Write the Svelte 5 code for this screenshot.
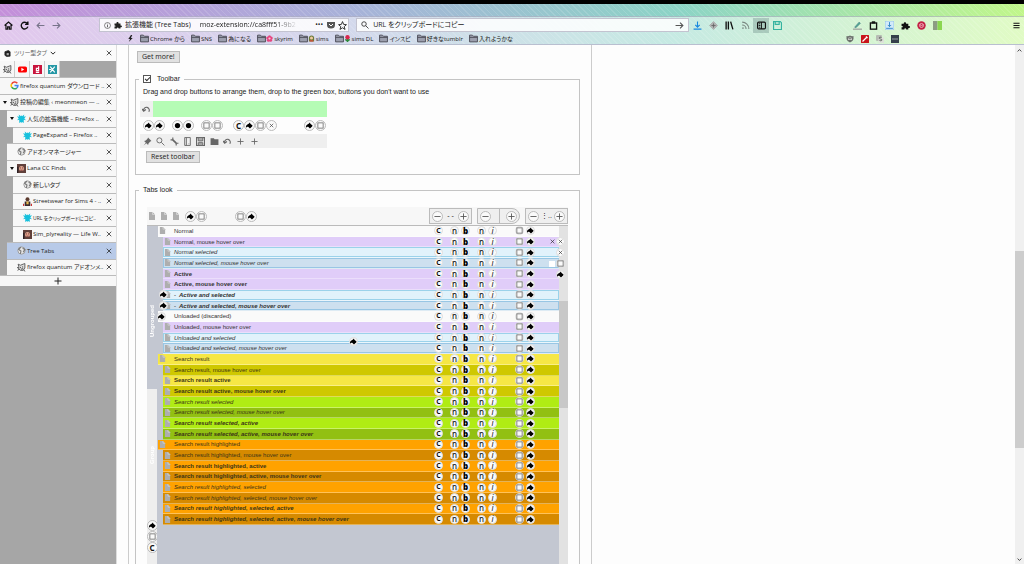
<script lang="ts">
	const bookmarks = [
		{ label: 'Chrome から' },
		{ label: 'SNS' },
		{ label: '為になる' },
		{ label: 'skyrim', icon: 'flower' },
		{ label: 'sims', icon: 'gem' },
		{ label: 'sims DL', icon: 'rose' },
		{ label: 'インスピ' },
		{ label: '好きなtumblr' },
		{ label: '入れようかな' }
	];

	const sideTabs = [
		{ title: 'firefox quantum ダウンロード ..', depth: 0, icon: 'google' },
		{ title: '投稿の編集 ‹ meonmeon — ..', depth: 0, icon: 'cat', open: true },
		{ title: '人気の拡張機能 – Firefox ..', depth: 1, icon: 'addon', open: true },
		{ title: 'PageExpand – Firefox ..', depth: 2, icon: 'addon' },
		{ title: 'アドオンマネージャー', depth: 1, icon: 'globe' },
		{ title: 'Lana CC Finds', depth: 1, icon: 'photo', open: true },
		{ title: '新しいタブ', depth: 2, icon: 'globe' },
		{ title: 'Streetwear for Sims 4 - ..', depth: 2, icon: 'person' },
		{ title: 'URL をクリップボードにコピ..', depth: 2, icon: 'addon', long: true },
		{ title: 'Sim_plyreality — Life W..', depth: 2, icon: 'photo' },
		{ title: 'Tree Tabs', depth: 1, icon: 'globe', active: true },
		{ title: 'firefox quantum アドオンメ..', depth: 1, icon: 'cat' }
	];

	const pinned = ['cat', 'youtube', 'd', 'x'];

	// b = bold, i = italic, p = parent row
	const rows = [
		{ label: 'Normal', tone: 'plain', style: 'p' },
		{ label: 'Normal, mouse hover over', tone: 'hover', style: '' },
		{ label: 'Normal selected', tone: 'sel', style: 'i' },
		{ label: 'Normal selected, mouse hover over', tone: 'selhover', style: 'i' },
		{ label: 'Active', tone: 'hover', style: 'b' },
		{ label: 'Active, mouse hover over', tone: 'hover', style: 'b' },
		{ label: 'Active and selected', tone: 'sel', style: 'bi', mark: '-', paint: true },
		{ label: 'Active and selected, mouse hover over', tone: 'selhover', style: 'bi', mark: '-', paint: true },
		{ label: 'Unloaded (discarded)', tone: 'plain', style: 'p', paint: true },
		{ label: 'Unloaded, mouse hover over', tone: 'hover', style: '' },
		{ label: 'Unloaded and selected', tone: 'sel', style: 'i' },
		{ label: 'Unloaded and selected, mouse hover over', tone: 'selhover', style: 'i' },
		{ label: 'Search result', tone: 'yellow', style: 'p' },
		{ label: 'Search result, mouse hover over', tone: 'olive', style: '' },
		{ label: 'Search result active', tone: 'yellow', style: 'b' },
		{ label: 'Search result active, mouse hover over', tone: 'olive', style: 'b' },
		{ label: 'Search result selected', tone: 'lime', style: 'i' },
		{ label: 'Search result selected, mouse hover over', tone: 'moss', style: 'i' },
		{ label: 'Search result selected, active', tone: 'lime', style: 'bi' },
		{ label: 'Search result selected, active, mouse hover over', tone: 'moss', style: 'bi' },
		{ label: 'Search result highlighted', tone: 'orange', style: 'p' },
		{ label: 'Search result highlighted, mouse hover over', tone: 'brown', style: '' },
		{ label: 'Search result highlighted, active', tone: 'orange', style: 'b' },
		{ label: 'Search result highlighted, active, mouse hover over', tone: 'brown', style: 'b' },
		{ label: 'Search result highlighted, selected', tone: 'orange', style: 'i' },
		{ label: 'Search result highlighted, selected, mouse hover over', tone: 'brown', style: 'i' },
		{ label: 'Search result highlighted, selected, active', tone: 'orange', style: 'bi' },
		{ label: 'Search result highlighted, selected, active, mouse hover over', tone: 'brown', style: 'bi' }
	];

	const toolGroups = [
		['bucket', 'bucket'],
		['dot', 'dot'],
		['square', 'square'],
		['c', 'bucket', 'square', 'cross'],
		['bucket', 'square']
	];
	const rowGroups = [['c'], ['n', 'b'], ['n', 'i'], ['square', 'bucket']];
	const unused = ['pin', 'search', 'wrench', 'panel', 'save', 'folderfill', 'undo', 'plus', 'plus'];

	const navIcons = ['home', 'reload', 'back', 'forward'];
	const midIcons = ['download', 'diamond', 'library', 'rss', 'sidebar', 'floppy'];
	const extIcons = ['pen', 'clipboard', 'savebox', 'puzzle', 'redeye', 'swatch'];
	const ext2Icons = ['shield', 'redpen', 'sbox', 'dots3'];

	let toolbarOn = $state(true);
	let query = $state('URL をクリップボードにコピー');
</script>

{#snippet icon(name: string, size: number)}
	<svg class="icon" width={size} height={size} viewBox="0 0 16 16" fill="none" stroke="currentColor" stroke-width="1.6" aria-hidden="true">
		{#if name === 'home'}
			<path d="M1 8 8 2l7 6M3.500 7v7.500h3v-4h3v4h3V7" stroke-width="2.200" />
		{:else if name === 'reload'}
			<path d="M13 4.500A6 6 0 1 0 14 10M14 1v5H9" stroke-width="2.400" />
		{:else if name === 'back'}
			<path d="M15 8H2M7 3 2 8l5 5" stroke="#77748a" stroke-width="2" />
		{:else if name === 'forward'}
			<path d="M1 8h13M9 3l5 5-5 5" stroke="#77748a" stroke-width="2" />
		{:else if name === 'go'}
			<path d="M1 8h13M9 3l5 5-5 5" stroke="#555" stroke-width="2" />
		{:else if name === 'info'}
			<circle cx="8" cy="8" r="6.800" stroke-width="1.200" /><path d="M8 7v5M8 4v1.600" />
		{:else if name === 'puzzle'}
			<path d="M1 5h4c-1-4 5-4 4 0h4v4c4-1 4 4 0 3.500V15H9c1-3-4-3-3 0H1v-4c3 1 3-3 0-2z" fill="currentColor" stroke="none" />
		{:else if name === 'pocket'}
			<path d="M0 2h16v6a8 7 0 0 1-16 0z" fill="#555" stroke="none" /><path d="m4 6 4 4 4-4" stroke="#fff" stroke-width="2" />
		{:else if name === 'star'}
			<path d="m8 1 2 5 5 .500-4 3.500 1.500 5L8 12l-4.500 3L5 10 1 6.500 6 6z" />
		{:else if name === 'search'}
			<circle cx="6" cy="6" r="4.500" /><path d="m9.500 9.500 5.500 5.500" />
		{:else if name === 'download'}
			<path d="M8 1v9M4 7l4 4 4-4M1 14.500h14" stroke="#1788e0" stroke-width="2" />
		{:else if name === 'diamond'}
			<path d="m8 1 7 7-7 7-7-7z" fill="#b5b9b8" stroke="#aaa" /><path d="M8 4v8M4 8h8" stroke="#777" /><circle cx="8" cy="8" r="2" fill="#666" stroke="none" />
		{:else if name === 'library'}
			<path d="M2 1v14M6 1v14M10 1l4 14" stroke-width="2.400" />
		{:else if name === 'rss'}
			<path d="M2 7a7 7 0 0 1 7 7M2 2a12 12 0 0 1 12 12" stroke="#7b8983" stroke-width="2" /><circle cx="3.500" cy="12.500" r="1.500" fill="#7b8983" stroke="none" />
		{:else if name === 'sidebar'}
			<rect x="1" y="2" width="14" height="12" rx="2" stroke-width="2" /><path d="M8 2v12M3 5h3M3 8h3M3 11h3" />
		{:else if name === 'floppy'}
			<path d="M1 1h12l2 2v12H1zM4 1v5h7V1" stroke="#34b3a0" stroke-width="2" />
		{:else if name === 'pen'}
			<path d="m3 11 8-9 2 2-8 8z" fill="#3baa87" stroke="#5f8f94" /><path d="M0 14.500h16" stroke="#999" stroke-width="2" />
		{:else if name === 'clipboard'}
			<rect x="2.500" y="3.500" width="11" height="11" stroke-width="2.400" /><path d="M5 2.500h6" stroke-width="4" />
		{:else if name === 'savebox'}
			<rect x="0" y="0" width="16" height="16" fill="#d3ebfa" stroke="#8fc1e4" /><path d="M8 2v8M5 7l3 3 3-3M2 13h12" stroke="#2b83c6" />
		{:else if name === 'redeye'}
			<circle cx="8" cy="8" r="7.500" fill="#c32345" stroke="none" /><circle cx="8" cy="8" r="3.500" stroke="#efb6c1" /><path d="m5 6 3 3 3-3" stroke="#efb6c1" />
		{:else if name === 'swatch'}
			<path d="M0 0h8v16H0z" fill="#8d9c83" stroke="none" /><path d="M8 0h8v16H8z" fill="#8bd650" stroke="none" />
		{:else if name === 'shield'}
			<path d="M1 2q4 1 7-1 3 2 7 1v6q-1 5-7 7-6-2-7-7z" fill="#6c716d" stroke="none" /><path d="M4 5h8v5H4z" fill="#c8ccc6" stroke="none" /><path d="m4 5 4 3 4-3" stroke="#666" />
		{:else if name === 'redpen'}
			<rect width="16" height="16" rx="1" fill="#c9141b" stroke="none" /><path d="m3 13 9-9M10 3l3 3" stroke="#fff" stroke-width="2.500" />
		{:else if name === 'sbox'}
			<rect width="12" height="12" rx="2" fill="#b7bcb5" stroke="none" /><rect x="5" y="5" width="11" height="11" fill="#dde1da" stroke="none" /><path d="M11 5c-6-2-6 3-2 3s4 5-2 3" stroke="#444" />
		{:else if name === 'dots3'}
			<rect width="16" height="16" fill="#35404b" stroke="none" /><path d="M3 8h2M7 8h2M11 8h2" stroke="#fff" stroke-width="2" />
		{:else if name === 'menu'}
			<path d="M1 3h14M1 8h14M1 13h14" stroke-width="2.400" />
		{:else if name === 'bolt'}
			<path d="M9 0 3 9h4l-3 7 9-9H9l3-7z" fill="currentColor" stroke="none" />
		{:else if name === 'folder'}
			<path d="M1 14V2h5l2 2h7v10z" fill="#9c9fae" stroke="#4a4a55" /><path d="M1 6h14" stroke="#4a4a55" />
		{:else if name === 'flower'}
			<g fill="#e6457f" stroke="none"><circle cx="8" cy="4" r="3.500" /><circle cx="4" cy="7" r="3.500" /><circle cx="12" cy="7" r="3.500" /><circle cx="5.500" cy="12" r="3.500" /><circle cx="10.500" cy="12" r="3.500" /></g><circle cx="8" cy="8" r="2.500" fill="#f8c7d6" stroke="none" />
		{:else if name === 'gem'}
			<path d="M2 15V7a6 6 0 0 1 12 0v8z" fill="#6b7a3a" stroke="none" /><circle cx="8" cy="7" r="3.500" fill="#f1c9a0" stroke="none" /><path d="M4 15v-3h8v3z" fill="#d74b3a" stroke="none" />
		{:else if name === 'rose'}
			<path d="M8 9v7M8 14l-5-4M8 14l5-4" stroke="#2f8a3c" stroke-width="3" /><circle cx="8" cy="5" r="5" fill="#d8264d" stroke="none" />
		{:else if name === 'google'}
			<path d="M13 4A6 6 0 0 0 3 5" stroke="#ea4335" stroke-width="2.800" /><path d="M3 5a6 6 0 0 0 0 6" stroke="#fbbc05" stroke-width="2.800" /><path d="M3 11a6 6 0 0 0 9 1.500" stroke="#34a853" stroke-width="2.800" /><path d="M12 12.500A6 6 0 0 0 14 8H8" stroke="#4285f4" stroke-width="2.800" />
		{:else if name === 'cat'}
			<path d="M3 6 2 2l4 2 5-2 3-1v8l-3 4H6L3 10z" fill="#ddd" stroke="#555" /><path d="M6 7v2M10 6v2M7 11l4-1M0 8l3 1M1 13l3-2M12 12l2 3" stroke="#444" />
		{:else if name === 'addon'}
			<path d="m0 4 4 1-1-4 4 3 1-2 1 2 4-3-1 4 4-1-3 4 3 3-4-1v6l-3-2-1 2-1-2-3 2v-6l-4 1 3-3z" fill="#16c0dc" stroke="none" />
		{:else if name === 'globe'}
			<circle cx="8" cy="8" r="6.500" fill="#e8e8e8" stroke="#999" /><path d="M7 2 3 6l4 3-1 5M10 4l4 2-3 5" stroke="#777" stroke-width="2" />
		{:else if name === 'photo'}
			<rect width="16" height="16" fill="#60403b" stroke="none" /><circle cx="8" cy="8" r="4.500" fill="#dda58f" stroke="none" /><path d="M5 7h2M9 7h2M6 11h4" stroke="#7b2e2e" /><path d="M1 16V5" stroke="#2d2024" stroke-width="3" />
		{:else if name === 'person'}
			<circle cx="8" cy="4" r="3.500" fill="#5b3a2e" stroke="none" /><path d="M3 8h10v8H3z" fill="#3a2b30" stroke="none" /><path d="M6 8h4v5H6z" fill="#e6b84e" stroke="none" /><path d="M1 12v4M15 12v4" stroke="#c33" stroke-width="2" />
		{:else if name === 'youtube'}
			<rect y="2.500" width="16" height="11" rx="3" fill="#f00" stroke="none" /><path d="m6 5 5 3-5 3z" fill="#fff" stroke="none" />
		{:else if name === 'd'}
			<rect width="16" height="16" fill="#c8143c" stroke="none" /><path d="M10 2v8H6V6h4M5 13h6" stroke="#fff" stroke-width="2" />
		{:else if name === 'x'}
			<rect width="16" height="16" fill="#2698a6" stroke="none" /><path d="m4 3 8 10M12 3 4 13M2 8h4" stroke="#fff" stroke-width="2" />
		{:else if name === 'book'}
			<path d="M2 4 10 1l4 3v10l-8 1-4-3z" fill="#222" stroke="#222" /><path d="M6 7h5v5H6z" fill="#aaa" stroke="none" />
		{:else if name === 'chev'}
			<path d="m2 5 6 6 6-6" stroke-width="2.600" />
		{:else if name === 'up'}
			<path d="m2 11 6-6 6 6" stroke-width="2.600" />
		{:else if name === 'close'}
			<path d="m2 2 12 12M14 2 2 14" stroke-width="2" />
		{:else if name === 'plus'}
			<path d="M8 1v14M1 8h14" stroke-width="2" />
		{:else if name === 'undo'}
			<path d="M3 10a5 5 0 1 1 9 2M0 7l3 4 4-3" stroke-width="2" />
		{:else if name === 'pin'}
			<path d="m9 1 6 6-2 1-3 3-1 3-3-3-5 4 4-5-3-3 3-1 3-3z" fill="currentColor" stroke="none" />
		{:else if name === 'wrench'}
			<path d="m5 5 6 6" stroke-width="3" /><path d="M1 5h4V1M11 15v-4h4" stroke-width="2" />
		{:else if name === 'panel'}
			<path d="M3 1h10v14H3zM6 1v14M10 12h1" />
		{:else if name === 'save'}
			<path d="M1 1h14v14H1z" stroke-width="2" /><path d="M4 1h8v6H4zM4 10h8v5H4z" fill="#aaa" />
		{:else if name === 'folderfill'}
			<path d="M1 2h6l1 2h7v10H1z" fill="currentColor" stroke="none" />
		{:else if name === 'page'}
			<path d="M2 0h7l5 5v11H2z" fill="#aeaeae" stroke="none" /><path d="M9 0v5h5" stroke="#d9d9d9" />
		{/if}
	</svg>
{/snippet}

{#snippet knob(name: string, size = 'large')}
	<button class="knob {size}" aria-label={name}>
		{#if name === 'c' || name === 'n' || name === 'b' || name === 'i'}
			<span class="glyph {name}">{name === 'c' ? 'C' : name}</span>
		{:else}
			<svg viewBox="0 0 16 16" aria-hidden="true">
				{#if name === 'bucket'}
					<path d="M1 13q-3-5 3-8l2-1 3-3 1 3 5 4-1 2-5 5-4-4q-3-1-4 2z" fill="#000" />
				{:else if name === 'dot'}
					<circle cx="8" cy="8" r="6" fill="#000" />
				{:else if name === 'square'}
					<rect x="2" y="2" width="12" height="12" fill="#fafafa" stroke="#666" stroke-width="1.800" />
				{:else if name === 'cross'}
					<path d="m4 4 8 8M12 4l-8 8" stroke="#444" stroke-width="1.600" />
				{:else if name === 'minus'}
					<path d="M1 8h14" stroke="#555" stroke-width="2" />
				{:else if name === 'plus'}
					<path d="M8 1v14M1 8h14" stroke="#555" stroke-width="2" />
				{/if}
			</svg>
		{/if}
	</button>
{/snippet}

<div class="browser">
	<header>
		<div class="strip"></div>
		<nav class="bar">
			{#each navIcons as name}
				<button class="tool" aria-label={name}>{@render icon(name, 9)}</button>
			{/each}
			<div class="url">
				{@render icon('info', 7)}
				{@render icon('puzzle', 8)}
				<span class="site">拡張機能 (Tree Tabs)</span>
				<span class="address">moz-extension://ca8fff51-9b2</span>
				<span class="more">•••</span>
				{@render icon('pocket', 8)}
				{@render icon('star', 9)}
			</div>
			<label class="find">
				{@render icon('search', 8)}
				<input type="text" aria-label="Search" bind:value={query} />
				{@render icon('go', 9)}
			</label>
			{#each midIcons as name}
				<button class="tool" class:on={name === 'sidebar'} aria-label={name}>{@render icon(name, 9)}</button>
			{/each}
			<div class="exts">
				{#each extIcons as name}
					<button class="tool" aria-label={name}>{@render icon(name, 9)}</button>
				{/each}
			</div>
			<button class="tool menu" aria-label="menu">{@render icon('menu', 7)}</button>
		</nav>
		<div class="marks">
			{@render icon('bolt', 7)}
			{#each bookmarks as mark}
				<a href="#top">
					{@render icon('folder', 9)}
					{#if mark.icon}{@render icon(mark.icon, 7)}{/if}<span>{mark.label}</span>
				</a>
			{/each}
			<div class="marks-end">
				{#each ext2Icons as name}
					<button class="tool" aria-label={name}>{@render icon(name, 8)}</button>
				{/each}
			</div>
		</div>
	</header>

	<div class="body">
		<aside>
			<div class="side-head">
				{@render icon('book', 7)}
				<span>ツリー型タブ</span>
				{@render icon('chev', 6)}
				<button class="x" aria-label="Close sidebar">{@render icon('close', 6)}</button>
			</div>
			<div class="pins">
				{#each pinned as name}
					<button aria-label={name}>{@render icon(name, 9)}</button>
				{/each}
			</div>
			<div class="side-tabs">
				{#each sideTabs as tab}
					<div class="side-tab d{tab.depth}" class:active={tab.active}>
						<span class="twisty">{#if tab.open}<i></i>{/if}</span>
						{@render icon(tab.icon, 9)}
						<span class="title" class:long={tab.long}>{tab.title}</span>
						<button class="x" aria-label="Close tab">{@render icon('close', 6)}</button>
					</div>
				{/each}
			</div>
			<button class="new-tab" aria-label="New tab">{@render icon('plus', 8)}</button>
		</aside>

		<main>
			<button class="btn">Get more!</button>

			<fieldset class="toolbar-set">
				<legend class="check">
					<input type="checkbox" id="toolbar-on" bind:checked={toolbarOn} />
					<label for="toolbar-on">Toolbar</label>
				</legend>
				<p>Drag and drop buttons to arrange them, drop to the green box, buttons you don't want to use</p>
				<div class="tools">
					<div class="green"><span class="cell">{@render icon('undo', 9)}</span></div>
					<div class="knobs">
						{#each toolGroups as group}
							<div class="group">
								{#each group as name}{@render knob(name)}{/each}
							</div>
						{/each}
					</div>
					<div class="unused">
						{#each unused as name}
							<span class="cell">{@render icon(name, name === 'plus' ? 7 : 9)}</span>
						{/each}
					</div>
				</div>
				<button class="btn reset">Reset toolbar</button>
			</fieldset>

			<fieldset class="look-set">
				<legend>Tabs look</legend>
				<div class="preview">
					<div class="preview-head">
						<div class="pages">
							{#each [0, 1, 2] as n (n)}{@render icon('page', 8)}{/each}
						</div>
						<div class="group">{@render knob('bucket')}{@render knob('square')}</div>
						<div class="group second">{@render knob('square')}{@render knob('bucket')}</div>
						<div class="steps">
							<div class="step">{@render knob('minus')}<span>- -</span>{@render knob('plus')}</div>
							<div class="step round">{@render knob('minus')}{@render knob('plus')}</div>
							<div class="step">{@render knob('minus')}<span>⋮..</span>{@render knob('plus')}</div>
						</div>
					</div>
					<div class="preview-body">
						<div class="groups">
							<div class="group-tab current"><span>Ungrouped</span></div>
							<div class="group-tab"><span>Group</span></div>
							<div class="group-tools">
								{@render knob('bucket')}{@render knob('square')}{@render knob('c')}
							</div>
						</div>
						<div class="list">
							<div class="rows">
								{#each rows as row}
									<div class="row {row.tone}" class:parent={row.style.includes('p')}>
										<span class="favicon" class:both={row.paint && !row.style.includes('p')}>
											{#if row.paint}{@render knob('bucket', 'small')}{/if}
											{#if !row.paint || !row.style.includes('p')}{@render icon('page', 7)}{/if}
										</span>
										<span class="name" class:bold={row.style.includes('b')} class:italic={row.style.includes('i')}>
											{#if row.mark}<i class="mark">{row.mark}</i>{/if}{row.label}
										</span>
										{#each rowGroups as group}
											<span class="group">
												{#each group as name}{@render knob(name, 'small')}{/each}
											</span>
										{/each}
									</div>
								{/each}
							</div>
							<div class="float">{@render knob('bucket', 'small')}</div>
						</div>
						<div class="track">
							<div class="edge">
								<span class="pair">{@render icon('close', 5)}{@render knob('cross', 'small')}</span>
								{@render knob('cross', 'small')}
								<span class="pair"><i class="blank"></i>{@render knob('square', 'small')}</span>
								{@render knob('bucket', 'small')}
							</div>
							<div class="thumb"></div>
						</div>
					</div>
				</div>
			</fieldset>
		</main>

		<div class="scroll">
			{@render icon('up', 5)}
			<div class="rail"><div class="thumb"></div></div>
			{@render icon('chev', 5)}
		</div>
	</div>
</div>

<style>
	:global(body) {
		background: #fdfdfd;
		overflow: hidden;
	}

	.browser {
		display: flex;
		flex-direction: column;
		height: 100vh;
		color: #222;
		font: 7px/10px 'Open Sans', 'Noto Sans CJK JP', sans-serif;
		font-feature-settings: 'palt';
	}

	button {
		font: inherit;
		color: inherit;
		padding: 0;
		border: 0;
		background: none;
	}

	.icon {
		flex: none;
		display: block;
	}

	header {
		flex: none;
		border-top: 4px solid #000;
		border-bottom: 1px solid #b9bfd0;
		background:
			repeating-linear-gradient(45deg, rgba(255, 255, 255, 0.12) 0 1px, transparent 1px 4px),
			linear-gradient(100deg, #c48fda, #a8b2d9 34%, #8cd4c6 66%, #c2f78a);
	}

	.strip {
		height: 12px;
	}

	.bar,
	.marks {
		display: flex;
		align-items: center;
		background: rgba(255, 255, 255, 0.5);
	}

	.bar {
		height: 17px;
		border-top: 1px solid rgba(80, 80, 120, 0.3);
		box-sizing: border-box;
	}

	.tool {
		flex: none;
		display: flex;
		align-items: center;
		justify-content: center;
		width: 16px;
		height: 15px;
		color: #111;
	}

	.tool.on {
		background: rgba(60, 90, 90, 0.25);
	}

	.url,
	.find {
		display: flex;
		align-items: center;
		box-sizing: border-box;
		height: 14px;
		min-width: 0;
		border: 1px solid #c3c3d0;
		background: rgba(255, 255, 255, 0.85);
	}

	.url {
		flex: 250 1 0;
		margin-left: 35px;
		padding: 0 1px 0 4px;
		gap: 3px;
	}

	.site,
	.address {
		white-space: nowrap;
		overflow: hidden;
	}

	.site {
		flex: none;
	}

	.address {
		flex: 1;
		margin-left: 6px;
		mask-image: linear-gradient(90deg, #000 75%, transparent 98%);
	}

	.more {
		margin: 0 1px 0 12px;
	}

	.find {
		flex: 332 1 0;
		margin-left: 7px;
		padding: 0 4px;
	}

	.find input {
		flex: 1;
		min-width: 0;
		padding: 0 4px;
		border: 0;
		background: none;
		font: inherit;
		color: inherit;
	}

	.exts {
		display: flex;
		margin-left: 64px;
	}

	.menu {
		margin-left: 63px;
	}

	.marks {
		height: 11px;
		padding: 0 122px 0 127px;
		gap: 6px;
		font-size: 6px;
	}

	.marks a {
		display: flex;
		align-items: center;
		flex: none;
		color: #222;
		text-decoration: none;
	}

	.marks a span {
		margin-left: 1px;
	}

	.marks-end {
		display: flex;
		margin-left: auto;
	}

	.marks-end .tool {
		width: 15px;
		height: 11px;
	}

	.body {
		flex: 1;
		min-height: 0;
		display: flex;
	}

	aside {
		flex: none;
		width: 116px;
		background: #a6a6a6;
		border-right: 1px solid #ddd;
		font-size: 6px;
	}

	.side-head {
		display: flex;
		align-items: center;
		height: 16px;
		padding-left: 4px;
		gap: 3px;
		background: #fbfbfb;
	}

	.side-head span {
		color: #666;
	}

	.x {
		display: flex;
		align-items: center;
		justify-content: center;
		flex: none;
		width: 10px;
		height: 14px;
		margin: 0 2px 0 auto;
	}

	.pins {
		display: flex;
		height: 16px;
	}

	.pins button {
		display: flex;
		align-items: center;
		justify-content: center;
		width: 15px;
		background: #f7f7f7;
		border-right: 1px solid #ccc;
	}

	.side-tabs {
		display: grid;
		grid-template-rows: repeat(12, 1fr);
		height: 198px;
	}

	.side-tab {
		display: flex;
		align-items: center;
		min-width: 0;
		background: #f7f7f7;
		border-top: 1px solid #bbb;
	}

	.side-tab.d1 {
		margin-left: 7px;
	}

	.side-tab.d2 {
		margin-left: 13px;
	}

	.side-tab.active {
		background: #b8cae8;
	}

	.twisty {
		flex: none;
		display: flex;
		justify-content: center;
		width: 10px;
	}

	.twisty i {
		border: 2px solid transparent;
		border-top: 3px solid #111;
		border-bottom: 0;
	}

	.title {
		flex: 1;
		margin-left: 1px;
		white-space: nowrap;
	}

	.title.long {
		font-size: 5px;
	}

	.new-tab {
		display: flex;
		align-items: center;
		justify-content: center;
		width: 100%;
		height: 11px;
		background: #f7f7f7;
		border-top: 1px solid #bbb;
	}

	main {
		flex: 0 1 464px;
		box-sizing: border-box;
		margin-left: 11px;
		padding: 6px 11px 0 6px;
		border: solid #ccc;
		border-width: 0 1px;
		overflow: hidden;
		font-family: 'Liberation Sans', sans-serif;
	}

	.btn {
		display: block;
		height: 12px;
		margin-left: 2px;
		padding: 0 4px;
		border: 1px solid #bbb;
		background: #e1e1e1;
		line-height: 10px;
		font-family: 'Open Sans', sans-serif;
	}

	fieldset {
		min-width: 0;
		margin: 0;
		padding: 0;
		border: 1px solid #c4c4c4;
	}

	.toolbar-set {
		margin-top: 11px;
		padding-bottom: 10px;
	}

	.look-set {
		margin-top: 10px;
	}

	legend {
		margin-left: 3px;
		padding: 0 4px;
		height: 10px;
	}

	.check {
		display: flex;
		align-items: center;
		gap: 6px;
	}

	.check input {
		appearance: none;
		width: 8px;
		height: 8px;
		margin: 0;
		border: 1px solid #555;
		background: #fff;
	}

	.check input:checked::before {
		content: '';
		display: block;
		width: 5px;
		height: 3px;
		margin: 1px 0 0 1px;
		border: solid #333;
		border-width: 0 0 1px 1px;
		transform: rotate(-45deg);
		box-sizing: border-box;
	}

	p {
		margin: 3px 0 4px 7px;
	}

	.tools {
		width: 187px;
		margin-left: 4px;
	}

	.cell {
		display: flex;
		align-items: center;
		justify-content: center;
	}

	.green {
		display: flex;
		height: 16px;
		background: #b5fcb5;
	}

	.green .cell {
		width: 13px;
		background: #f0f0f0;
		color: #666;
	}

	.knobs {
		display: flex;
		align-items: center;
		height: 17px;
		padding-left: 3px;
		gap: 7px;
	}

	.knobs .group:nth-child(4) {
		margin-left: 3px;
	}

	.knobs .group:last-child {
		margin-left: 20px;
	}

	.group {
		display: flex;
		flex: none;
	}

	.unused {
		display: grid;
		grid-template-columns: repeat(9, 1fr);
		height: 14px;
		padding: 0 66px 0 1px;
		background: #efefef;
		color: #666;
	}

	.reset {
		margin: 3px 0 1px 10px;
	}

	.knob {
		flex: none;
		display: flex;
		align-items: center;
		justify-content: center;
		box-sizing: border-box;
		width: 11px;
		height: 11px;
		border: 1px solid #bbb;
		border-radius: 50%;
		background: #fafafa;
	}

	.knob svg {
		width: 7px;
		height: 7px;
		fill: none;
	}

	.knob.small {
		width: 9px;
		height: 9px;
		border-color: #ddd;
	}

	.glyph {
		color: #111;
		font: 700 8px/8px 'Noto Sans', sans-serif;
	}

	.small .glyph.c {
		font-size: 7px;
	}

	.glyph.n {
		font-weight: 500;
	}

	.glyph.b {
		font-weight: 900;
		color: #000;
	}

	.glyph.i {
		font-weight: 400;
		font-style: italic;
	}

	.preview {
		margin: 12px 11px 0 11px;
	}

	.preview-head {
		display: flex;
		align-items: center;
		height: 18px;
		background: #f7f7f7;
		border-bottom: 1px solid #bbb;
	}

	.pages {
		display: flex;
		gap: 4px;
		padding: 0 5px 0 1px;
	}

	.second {
		margin-left: 28px;
	}

	.steps {
		display: flex;
		gap: 5px;
		margin-left: auto;
	}

	.step {
		display: flex;
		align-items: center;
		justify-content: space-between;
		box-sizing: border-box;
		width: 43px;
		height: 16px;
		padding: 0 2px;
		border: 1px solid #bbb;
		background: #efefef;
	}

	.step.round {
		border-radius: 0 8px 8px 0;
		background: linear-gradient(90deg, transparent 50%, #bbb 50% 53%, transparent 53%), #efefef;
	}

	.preview-body {
		display: flex;
		height: 344px;
	}

	.groups {
		flex: none;
		width: 10px;
		background: #eee;
	}

	.group-tab {
		display: flex;
		align-items: center;
		justify-content: center;
		height: 131px;
		color: #fff;
		font: 700 6px/10px 'Liberation Sans', sans-serif;
	}

	.group-tab span {
		writing-mode: vertical-rl;
		transform: rotate(180deg);
	}

	.group-tab.current {
		align-items: flex-end;
		box-sizing: border-box;
		height: 163px;
		padding-bottom: 52px;
		background: #c3c7d1;
	}

	.list {
		position: relative;
		flex: 1;
		min-width: 0;
		background: #c3c7d1;
	}

	.rows {
		display: grid;
		grid-template-rows: repeat(28, 1fr);
		height: 299px;
	}

	.row {
		display: flex;
		align-items: center;
		min-height: 0;
		box-sizing: border-box;
		margin-left: 6px;
		padding-right: 24px;
		border-bottom: 1px solid rgba(255, 255, 255, 0.35);
		color: #333;
		font-size: 6px;
	}

	.row.parent {
		margin-left: 1px;
	}

	.favicon {
		flex: none;
		display: flex;
		align-items: center;
		justify-content: flex-end;
		width: 8px;
		margin-right: 3px;
	}

	.parent .favicon {
		margin-right: 8px;
	}

	.favicon.both .knob {
		margin-right: -4px;
		z-index: 1;
	}

	.name {
		flex: 1;
		white-space: nowrap;
	}

	.bold {
		font-weight: 700;
	}

	.italic {
		font-style: italic;
	}

	.mark {
		margin-right: 3px;
	}

	.row .group {
		gap: 2px;
		margin-left: 7px;
	}

	.row .group:last-child {
		margin-left: 18px;
	}

	.plain {
		background: #fafafa;
	}

	.hover {
		background: #e0cdf9;
	}

	.sel {
		background: #e1f2fb;
		box-shadow: inset 0 0 0 1px #9bd2ea;
	}

	.selhover {
		background: #cde0ef;
		box-shadow: inset 0 0 0 1px #98c6e4;
	}

	.yellow {
		background: #f6e745;
	}

	.olive {
		background: #cfc800;
	}

	.lime {
		background: #b0ec14;
	}

	.moss {
		background: #92c012;
	}

	.orange {
		background: #ffa200;
	}

	.brown {
		background: #d68a00;
	}

	.yellow,
	.olive,
	.lime,
	.moss,
	.orange,
	.brown {
		color: #3c3518;
	}

	.float {
		position: absolute;
		left: 192px;
		top: 111px;
	}

	.track {
		position: relative;
		flex: none;
		width: 9px;
		background: #e2e2e2;
	}

	.track .thumb {
		height: 107px;
		margin-top: 75px;
		background: #c8c8c8;
	}

	.edge {
		position: absolute;
		top: 11px;
		right: 3px;
		display: flex;
		flex-direction: column;
		align-items: flex-end;
		gap: 2px;
	}

	.pair {
		display: flex;
		align-items: center;
		gap: 1px;
	}

	.blank {
		width: 6px;
		height: 6px;
		background: #fff;
	}

	.scroll {
		flex: none;
		display: flex;
		flex-direction: column;
		align-items: center;
		justify-content: space-between;
		box-sizing: border-box;
		width: 9px;
		margin-left: auto;
		padding: 3px 0 2px;
		background: #f0f0f0;
	}

	.rail {
		flex: 1;
		width: 100%;
		display: flex;
		flex-direction: column;
	}

	.rail::before {
		content: '';
		flex: 197;
	}

	.rail::after {
		content: '';
		flex: 108;
	}

	.rail .thumb {
		flex: 196;
		background: #cdcdcd;
	}

	.group-tools {
		display: flex;
		flex-direction: column;
		align-items: center;
	}
</style>
